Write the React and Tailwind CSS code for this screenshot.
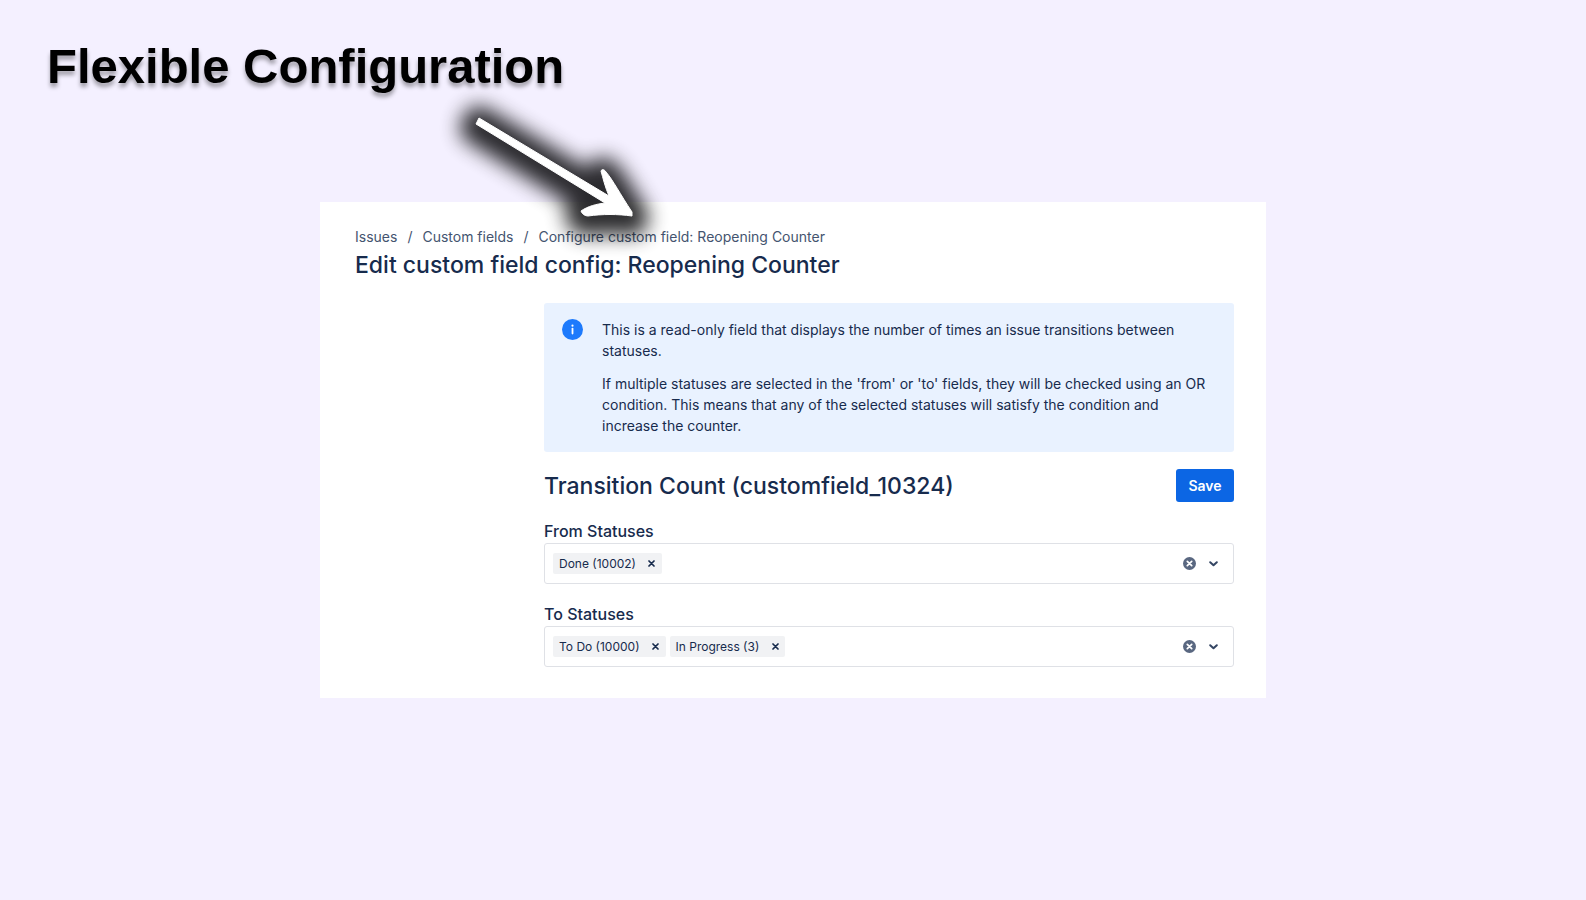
import { useState } from "react";

const ARROW =
  "M49 38 L179 116 C175 107 173 98 171 91 C172 89 174 89 176 92 C183 100 190 114 202 132 L202 136 C188 134 172 134 158 136 C155 136 152 134 151 131 C158 126 167 124 175 123 L46 44 Z";

const ArrowCallout = () => (
  <svg
    className="absolute left-[430px] top-[80px] pointer-events-none overflow-visible"
    width="260"
    height="200"
    viewBox="0 0 260 200"
    fill="none"
    aria-hidden="true"
  >
    <defs>
      <filter
        id="arrow-glow"
        x="-50%"
        y="-60%"
        width="200%"
        height="220%"
        colorInterpolationFilters="sRGB"
      >
        <feGaussianBlur stdDeviation="10" />
      </filter>
    </defs>
    <path
      d={ARROW}
      transform="translate(0 4)"
      fill="#0a0a0c"
      stroke="#0a0a0c"
      strokeWidth="32"
      strokeLinejoin="round"
      opacity="0.86"
      filter="url(#arrow-glow)"
    />
    <path d={ARROW} fill="#fff" stroke="#fff" strokeWidth="1" strokeLinejoin="round" />
  </svg>
);

const InfoIcon = () => (
  <svg className="shrink-0" width="21" height="21" viewBox="0 0 21 21" aria-hidden="true">
    <circle cx="10.5" cy="10.5" r="10.5" fill="#1d7afc" />
    <circle cx="10.5" cy="6.7" r="1.1" fill="#fff" />
    <rect x="9.6" y="8.8" width="1.8" height="6.6" rx="0.8" fill="#fff" />
  </svg>
);

const StatusSelect = ({ id, label, initial }) => {
  const [values, setValues] = useState(initial);

  return (
    <div>
      <label htmlFor={id} className="block text-base leading-6 font-medium">
        {label}
      </label>
      <div className="flex items-center h-[41px] px-2 border border-[#dfe1e6] rounded-[3px] bg-white">
        <div className="flex flex-1 items-center gap-1">
          {values.map((value) => (
            <span
              key={value}
              className="flex items-center h-[21px] pl-1.5 rounded-[2px] bg-[#f1f2f4] text-xs leading-5 whitespace-nowrap"
            >
              {value}
              <button
                type="button"
                aria-label={`Remove ${value}`}
                onClick={() => setValues(values.filter((v) => v !== value))}
                className="flex items-center justify-center w-5 h-[21px] ml-1.5"
              >
                <svg width="7" height="7" viewBox="0 0 7 7" fill="none">
                  <path
                    d="M1 1 L6 6 M6 1 L1 6"
                    stroke="#172b4d"
                    strokeWidth="1.7"
                    strokeLinecap="round"
                  />
                </svg>
              </button>
            </span>
          ))}
          <input id={id} type="text" className="flex-1 min-w-0 h-6 text-sm outline-none" />
        </div>
        <button
          type="button"
          aria-label={`Clear ${label}`}
          onClick={() => setValues([])}
          className="flex items-center justify-center w-6 h-6"
        >
          <svg width="13" height="13" viewBox="0 0 13 13" fill="none">
            <circle cx="6.5" cy="6.5" r="6.5" fill="#596780" />
            <path
              d="M4.3 4.3 L8.7 8.7 M8.7 4.3 L4.3 8.7"
              stroke="#fff"
              strokeWidth="1.7"
              strokeLinecap="round"
            />
          </svg>
        </button>
        <button
          type="button"
          aria-label={`Open ${label}`}
          className="flex items-center justify-center w-6 h-6"
        >
          <svg width="9" height="6" viewBox="0 0 9 6" fill="none">
            <path
              d="M1.2 1.2 L4.5 4.3 L7.8 1.2"
              stroke="#344563"
              strokeWidth="2"
              strokeLinecap="round"
              strokeLinejoin="round"
            />
          </svg>
        </button>
      </div>
    </div>
  );
};

const App = () => {
  return (
    <div className="relative min-h-screen bg-[#f4f0ff] pt-[39px] pb-12">
      <h1 className="pl-[47px] text-[49px] leading-[54px] font-bold text-black font-['Liberation_Sans',Arial,sans-serif] [text-shadow:0_4px_4px_rgba(0,0,0,0.35)]">
        Flexible Configuration
      </h1>

      <main className="mx-80 mt-[109px] pt-[25px] pb-[31px] pl-[35px] pr-8 bg-white text-[#172b4d] font-['Inter',sans-serif]">
        <nav aria-label="Breadcrumb">
          <ol className="flex text-sm leading-5 text-[#44546f] whitespace-nowrap">
            <li>
              <a href="#issues">Issues</a>
            </li>
            <li className="before:content-['/'] before:px-[10px]">
              <a href="#custom-fields">Custom fields</a>
            </li>
            <li className="before:content-['/'] before:px-[10px]">
              <a href="#configure">Configure custom field: Reopening Counter</a>
            </li>
          </ol>
        </nav>
        <h2 className="mt-1 text-[23px] leading-7 font-medium">
          Edit custom field config: Reopening Counter
        </h2>

        <div className="mt-6 ml-[189px]">
          <section className="flex gap-[19px] rounded-[3px] bg-[#e9f2ff] py-4 pl-[18px] pr-4">
            <InfoIcon />
            <div className="text-sm leading-[21px]">
              <p>
                This is a read-only field that displays the number of times an issue transitions
                between statuses.
              </p>
              <p className="mt-3">
                If multiple statuses are selected in the 'from' or 'to' fields, they will be checked
                using an OR condition. This means that any of the selected statuses will satisfy the
                condition and increase the counter.
              </p>
            </div>
          </section>

          <form onSubmit={(e) => e.preventDefault()}>
            <div className="flex items-center justify-between my-[17px]">
              <h3 className="text-[23px] leading-8 font-medium">
                Transition Count (customfield_10324)
              </h3>
              <button
                type="submit"
                className="h-[33px] w-[58px] rounded-[3px] bg-[#0c66e4] text-sm font-semibold text-white"
              >
                Save
              </button>
            </div>
            <div className="flex flex-col gap-[18px]">
              <StatusSelect id="from-statuses" label="From Statuses" initial={["Done (10002)"]} />
              <StatusSelect
                id="to-statuses"
                label="To Statuses"
                initial={["To Do (10000)", "In Progress (3)"]}
              />
            </div>
          </form>
        </div>
      </main>

      <ArrowCallout />
    </div>
  );
};

export default App;
